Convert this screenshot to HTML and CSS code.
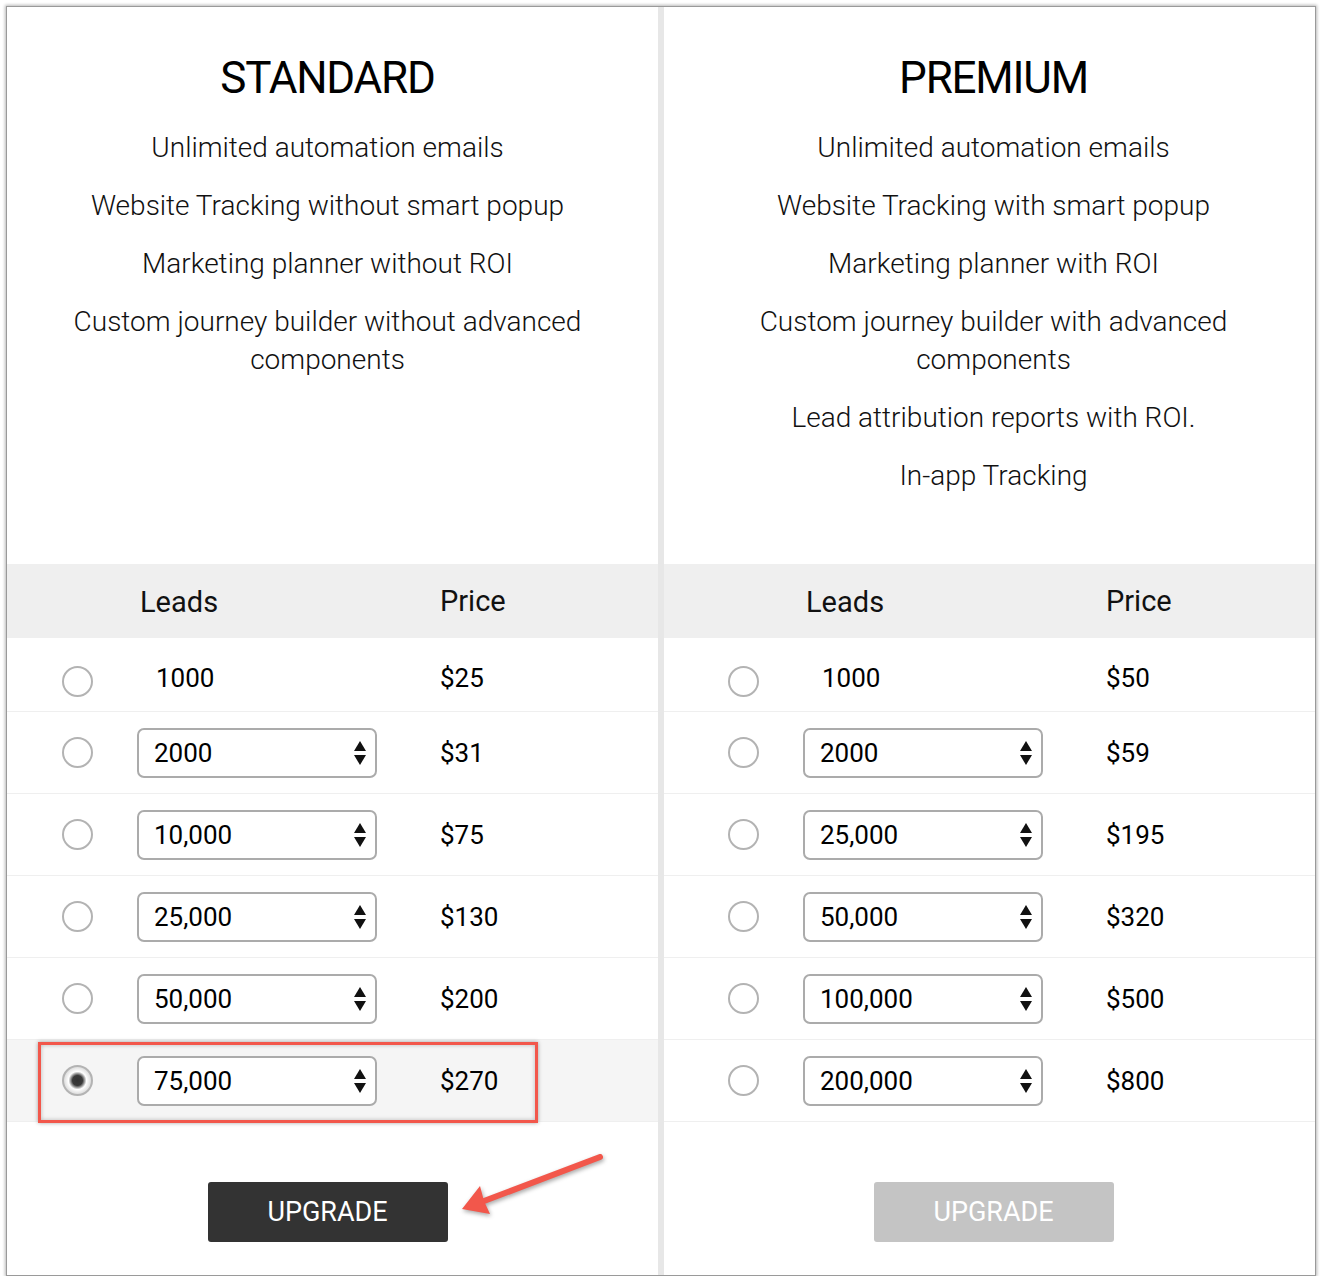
FILE: index.html
```html
<!DOCTYPE html>
<html lang="en">
<head>
<meta charset="utf-8">
<title>Plans</title>
<link rel="stylesheet" href="styles.css">
</head>
<body>
<div class="frame">
  <section class="plan plan--standard">
    <div class="plan-top">
      <h2 class="plan-title">STANDARD</h2>
      <ul class="features">
        <li>Unlimited automation emails</li>
        <li>Website Tracking without smart popup</li>
        <li>Marketing planner without ROI</li>
        <li>Custom journey builder without advanced components</li>
      </ul>
    </div>
    <div class="pricing">
      <div class="pricing-head"><span></span><span class="col-leads">Leads</span><span class="col-price">Price</span></div>
      <div class="pricing-row pricing-row--first"><span class="radio"></span><span class="lead-fixed">1000</span><span class="price">$25</span></div>
      <div class="pricing-row"><span class="radio"></span><div class="select"><span>2000</span><svg class="arrows" viewBox="0 0 12 26" width="12" height="26"><polygon points="0,11 6,1 12,11"/><polygon points="0,15 12,15 6,25"/></svg></div><span class="price">$31</span></div>
      <div class="pricing-row"><span class="radio"></span><div class="select"><span>10,000</span><svg class="arrows" viewBox="0 0 12 26" width="12" height="26"><polygon points="0,11 6,1 12,11"/><polygon points="0,15 12,15 6,25"/></svg></div><span class="price">$75</span></div>
      <div class="pricing-row"><span class="radio"></span><div class="select"><span>25,000</span><svg class="arrows" viewBox="0 0 12 26" width="12" height="26"><polygon points="0,11 6,1 12,11"/><polygon points="0,15 12,15 6,25"/></svg></div><span class="price">$130</span></div>
      <div class="pricing-row"><span class="radio"></span><div class="select"><span>50,000</span><svg class="arrows" viewBox="0 0 12 26" width="12" height="26"><polygon points="0,11 6,1 12,11"/><polygon points="0,15 12,15 6,25"/></svg></div><span class="price">$200</span></div>
      <div class="pricing-row is-selected"><span class="radio radio--checked"></span><div class="select"><span>75,000</span><svg class="arrows" viewBox="0 0 12 26" width="12" height="26"><polygon points="0,11 6,1 12,11"/><polygon points="0,15 12,15 6,25"/></svg></div><span class="price">$270</span><div class="annotation-box"></div></div>
    </div>
    <div class="plan-foot"><button class="btn">UPGRADE</button></div>
  </section>
  <section class="plan plan--premium">
    <div class="plan-top">
      <h2 class="plan-title">PREMIUM</h2>
      <ul class="features">
        <li>Unlimited automation emails</li>
        <li>Website Tracking with smart popup</li>
        <li>Marketing planner with ROI</li>
        <li>Custom journey builder with advanced components</li>
        <li>Lead attribution reports with ROI.</li>
        <li>In-app Tracking</li>
      </ul>
    </div>
    <div class="pricing">
      <div class="pricing-head"><span></span><span class="col-leads">Leads</span><span class="col-price">Price</span></div>
      <div class="pricing-row pricing-row--first"><span class="radio"></span><span class="lead-fixed">1000</span><span class="price">$50</span></div>
      <div class="pricing-row"><span class="radio"></span><div class="select"><span>2000</span><svg class="arrows" viewBox="0 0 12 26" width="12" height="26"><polygon points="0,11 6,1 12,11"/><polygon points="0,15 12,15 6,25"/></svg></div><span class="price">$59</span></div>
      <div class="pricing-row"><span class="radio"></span><div class="select"><span>25,000</span><svg class="arrows" viewBox="0 0 12 26" width="12" height="26"><polygon points="0,11 6,1 12,11"/><polygon points="0,15 12,15 6,25"/></svg></div><span class="price">$195</span></div>
      <div class="pricing-row"><span class="radio"></span><div class="select"><span>50,000</span><svg class="arrows" viewBox="0 0 12 26" width="12" height="26"><polygon points="0,11 6,1 12,11"/><polygon points="0,15 12,15 6,25"/></svg></div><span class="price">$320</span></div>
      <div class="pricing-row"><span class="radio"></span><div class="select"><span>100,000</span><svg class="arrows" viewBox="0 0 12 26" width="12" height="26"><polygon points="0,11 6,1 12,11"/><polygon points="0,15 12,15 6,25"/></svg></div><span class="price">$500</span></div>
      <div class="pricing-row"><span class="radio"></span><div class="select"><span>200,000</span><svg class="arrows" viewBox="0 0 12 26" width="12" height="26"><polygon points="0,11 6,1 12,11"/><polygon points="0,15 12,15 6,25"/></svg></div><span class="price">$800</span></div>
    </div>
    <div class="plan-foot"><button class="btn btn--disabled">UPGRADE</button></div>
  </section>
  <svg class="annotation-arrow" viewBox="0 0 180 90" width="180" height="90">
    <line x1="160" y1="17" x2="44" y2="61" stroke="#f2574b" stroke-width="6" stroke-linecap="round"/>
    <polygon points="22,69 40,46 44,61 50,74" fill="#f2574b"/>
  </svg>
</div>
</body>
</html>
```

FILE: styles.css
```css
html, body {
  margin: 0;
  padding: 0;
  background: #ffffff;
}

body {
  font-family: Roboto, "Liberation Sans", sans-serif;
  color: #111111;
}

.frame {
  position: relative;
  display: flex;
  width: 1308px;
  height: 1268px;
  margin: 6px 0 0 6px;
  border: 1px solid #9a9a9a;
  box-shadow: 0 0 3px 1px rgba(0, 0, 0, 0.28);
  background: #ffffff;
}

.plan {
  display: flex;
  flex-direction: column;
  width: 651px;
  flex: none;
}

.plan--standard {
  border-right: 6px solid #e7e7e7;
  --pad-l: 0px;
  --pad-r: 10px;
  --row-pl: 55px;
}

.plan--premium {
  --pad-l: 8px;
  --pad-r: 0px;
  --row-pl: 64px;
}

.plan-top {
  height: 557px;
  box-sizing: border-box;
  padding: 43px var(--pad-r) 0 var(--pad-l);
  text-align: center;
}

.plan-title {
  margin: 0 0 23px;
  font-size: 44px;
  line-height: 56px;
  font-weight: 400;
  letter-spacing: -1.2px;
  color: #000000;
}

.features {
  list-style: none;
  margin: 0 auto;
  padding: 0;
  width: 560px;
}

.features li {
  font-size: 28px;
  line-height: 38px;
  font-weight: 300;
  margin-bottom: 20px;
  color: #111111;
}

.pricing-head,
.pricing-row {
  display: grid;
  grid-template-columns: 75px 303px 1fr;
  align-items: center;
  padding-left: var(--row-pl);
}

.pricing-head {
  height: 74px;
  background: #efefef;
  font-size: 29px;
  color: #111111;
}

.col-leads {
  padding-left: 3px;
  padding-top: 2px;
}

.pricing-row {
  position: relative;
  height: 81px;
  border-bottom: 1px solid #efefef;
  font-size: 26px;
  color: #000000;
}

.pricing-row--first {
  height: 66px;
  padding-top: 7px;
}

.pricing-row.is-selected {
  background: #f5f5f5;
}

.radio {
  display: block;
  width: 31px;
  height: 31px;
  box-sizing: border-box;
  border: 2px solid #b3b3b3;
  border-radius: 50%;
  background: #ffffff;
}

.pricing-row--first .radio {
  margin-top: 6px;
}

.radio--checked {
  background: radial-gradient(circle at 50% 50%, #333333 0, #3a3a3a 5px, #9a9a9a 7px, #ffffff 9px, #f0f0f0 11px, #d9d9d9 14px);
}

.lead-fixed {
  padding-left: 19px;
}

.select {
  display: flex;
  align-items: center;
  justify-content: space-between;
  width: 240px;
  height: 50px;
  box-sizing: border-box;
  padding: 0 9px 0 15px;
  border: 2px solid #ababab;
  border-radius: 7px;
  background: #ffffff;
}

.arrows {
  display: block;
  fill: #111111;
}

.price {
  padding-top: 0;
}

.annotation-box {
  position: absolute;
  left: 31px;
  top: 2px;
  width: 500px;
  height: 81px;
  box-sizing: border-box;
  border: 3px solid #f2574b;
  box-shadow: 0 0 4px rgba(0, 0, 0, 0.35), inset 0 0 4px rgba(0, 0, 0, 0.25);
  pointer-events: none;
}

.plan-foot {
  display: flex;
  justify-content: center;
  padding: 60px var(--pad-r) 0 var(--pad-l);
}

.btn {
  width: 240px;
  height: 60px;
  border: 0;
  border-radius: 3px;
  background: #333333;
  color: #ffffff;
  font-family: Roboto, "Liberation Sans", sans-serif;
  font-size: 27px;
  font-weight: 400;
  padding: 0;
}

.btn--disabled {
  background: #c4c4c4;
}

.annotation-arrow {
  position: absolute;
  left: 433px;
  top: 1133px;
  filter: drop-shadow(1px 2px 2px rgba(0, 0, 0, 0.35));
}
```
